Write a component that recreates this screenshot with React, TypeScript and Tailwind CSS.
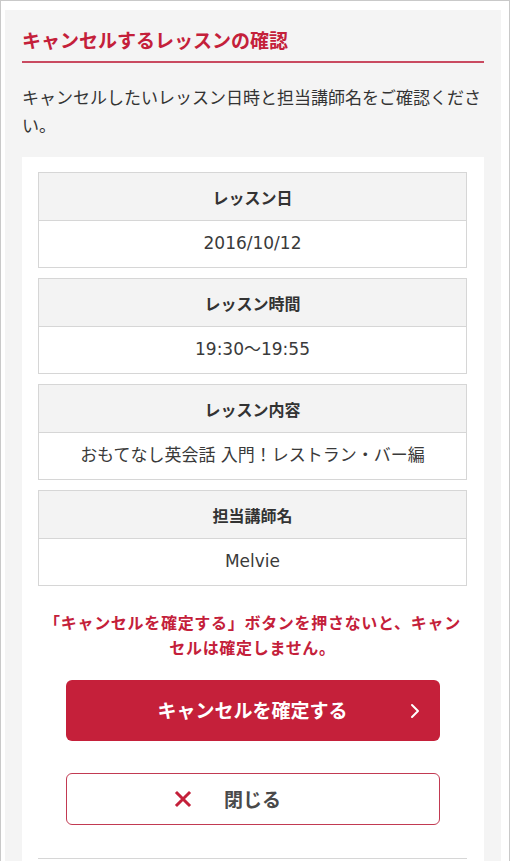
import { ReactNode } from 'react';

const jp = { fontFamily: '"Noto Sans CJK JP", "Noto Sans", sans-serif' };
const latin = { fontFamily: '"DejaVu Sans", "Noto Sans CJK JP", sans-serif' };

type Row = { label: string; value: string };

const rows: Row[] = [
  { label: 'レッスン日', value: '2016/10/12' },
  { label: 'レッスン時間', value: '19:30〜19:55' },
  { label: 'レッスン内容', value: 'おもてなし英会話 入門！レストラン・バー編' },
  { label: '担当講師名', value: 'Melvie' },
];

const InfoBox = ({ label, children }: { label: string; children: ReactNode }) => (
  <div className="border border-[#d6d6d6]">
    <div className="h-[48px] flex items-center justify-center bg-[#f3f3f3] border-b border-[#d6d6d6] text-[16px] font-bold text-[#333]">
      {label}
    </div>
    <div className="h-[46px] flex items-center justify-center text-[17px] text-[#3a3a3a]" style={latin}>
      {children}
    </div>
  </div>
);

const App = () => {
  return (
    <div
      className="w-[510px] h-[861px] overflow-hidden bg-white border-l border-t border-r border-[#c9c9c9] pl-[4px] pt-[9px] pr-[8px] flex"
      style={jp}
    >
      <div className="flex-1 bg-[#f4f4f4] px-[17px] pt-[17px]">
        {/* heading */}
        <h1 className="text-[19px] leading-[26px] font-bold text-[#c4203a] pb-[8px] border-b-2 border-[#c94a60]">
          キャンセルするレッスンの確認
        </h1>
        <p className="mt-[20px] mb-[18px] text-[17px] leading-[28px] text-[#333]">
          キャンセルしたいレッスン日時と担当講師名をご確認ください。
        </p>

        {/* card */}
        <div className="bg-white pt-[15px] pl-[16px] pr-[17px]">
          <div className="flex flex-col gap-[10px]">
            {rows.map(row => (
              <InfoBox key={row.label} label={row.label}>
                {row.value}
              </InfoBox>
            ))}
          </div>

          <p className="mt-[24px] text-center text-[16px] leading-[25px] tracking-[0.7px] font-bold text-[#c4203a]">
            「キャンセルを確定する」ボタンを押さないと、キャンセルは確定しません。
          </p>

          <button className="relative mt-[20px] mx-auto flex items-center justify-center w-[374px] h-[61px] rounded-[6px] bg-[#c5203a] text-white text-[19px] font-bold">
            キャンセルを確定する
            <svg
              className="absolute right-[20px] top-1/2 -translate-y-1/2"
              width="10"
              height="16"
              viewBox="0 0 10 16"
              fill="none"
              stroke="white"
              strokeWidth="2"
              strokeLinecap="round"
              strokeLinejoin="round"
            >
              <path d="M2 2l6 6-6 6" />
            </svg>
          </button>

          <button className="relative mt-[32px] mx-auto flex items-center justify-center w-[374px] h-[52px] rounded-[6px] bg-white border border-[#c23a52] text-[19px] font-bold text-[#4a4a4a]">
            <svg
              className="absolute left-[107px] top-1/2 -translate-y-1/2"
              width="18"
              height="18"
              viewBox="0 0 18 18"
              fill="none"
              stroke="#c4203a"
              strokeWidth="3"
              strokeLinecap="square"
            >
              <path d="M3 3l12 12M15 3L3 15" />
            </svg>
            閉じる
          </button>

          <div className="mt-[33px] h-[40px] border-t border-[#d6d6d6]" />
        </div>
      </div>
    </div>
  );
};

export default App;
